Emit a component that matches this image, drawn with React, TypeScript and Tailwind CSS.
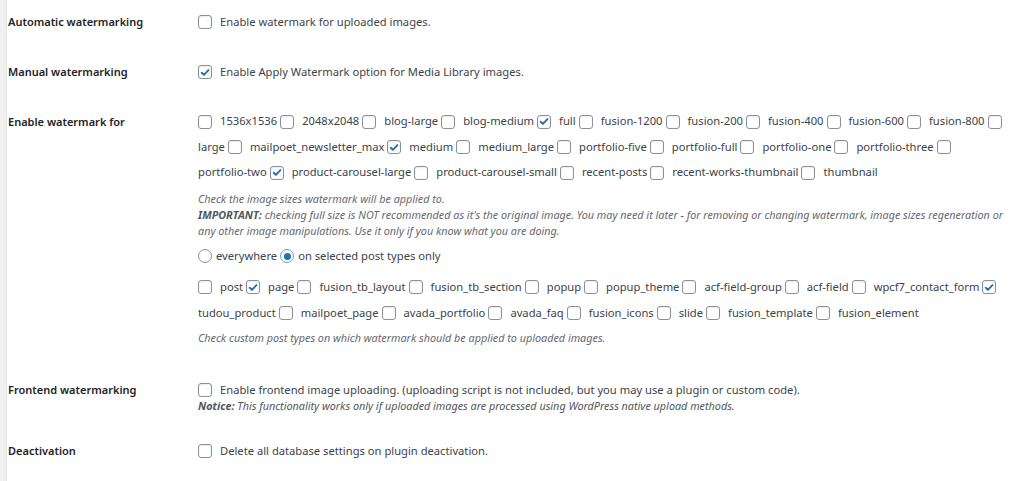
import React from 'react';

type Tok = string | { cb: boolean };

const font = "font-['Segoe_UI','Noto_Sans',sans-serif]";

// WP-style checkbox
const Box = ({ on }: { on?: boolean }) => (
  <span className="inline-flex items-center justify-center w-[14px] h-[14px] shrink-0 rounded-[3px] border border-[#8c8f94] bg-white shadow-[inset_0_1px_2px_rgba(0,0,0,0.08)]">
    {on && (
      <svg viewBox="0 0 14 14" className="w-[13px] h-[13px]">
        <path d="M3.2 7.3l2.5 2.5L11 4.2" fill="none" stroke="#2271b1" strokeWidth="2.2" strokeLinecap="round" strokeLinejoin="round" />
      </svg>
    )}
  </span>
);

const Radio = ({ on }: { on?: boolean }) => (
  <span className={`inline-flex items-center justify-center w-[14px] h-[14px] shrink-0 rounded-full border bg-white ${on ? 'border-[#6d9fcc]' : 'border-[#8c8f94]'}`}>
    {on && <span className="w-[7px] h-[7px] rounded-full bg-[#2271b1]" />}
  </span>
);

// one wrapped line of checkbox / label tokens
const TokLine = ({ items }: { items: Tok[] }) => (
  <div className="flex items-center h-[25.5px] whitespace-nowrap">
    {items.map((it, i) =>
      typeof it === 'string' ? (
        <span key={i} className="mr-[3px]">{it}</span>
      ) : (
        <span key={i} className="mr-[8px] flex"><Box on={it.cb} /></span>
      )
    )}
  </div>
);

const c = (on = false) => ({ cb: on });

const sizeLines: Tok[][] = [
  [c(), '1536x1536', c(), '2048x2048', c(), 'blog-large', c(), 'blog-medium', c(true), 'full', c(), 'fusion-1200', c(), 'fusion-200', c(), 'fusion-400', c(), 'fusion-600', c(), 'fusion-800', c()],
  ['large', c(), 'mailpoet_newsletter_max', c(true), 'medium', c(), 'medium_large', c(), 'portfolio-five', c(), 'portfolio-full', c(), 'portfolio-one', c(), 'portfolio-three', c()],
  ['portfolio-two', c(true), 'product-carousel-large', c(), 'product-carousel-small', c(), 'recent-posts', c(), 'recent-works-thumbnail', c(), 'thumbnail'],
];

const postLines: Tok[][] = [
  [c(), 'post', c(true), 'page', c(), 'fusion_tb_layout', c(), 'fusion_tb_section', c(), 'popup', c(), 'popup_theme', c(), 'acf-field-group', c(), 'acf-field', c(), 'wpcf7_contact_form', c(true)],
  ['tudou_product', c(), 'mailpoet_page', c(), 'avada_portfolio', c(), 'avada_faq', c(), 'fusion_icons', c(), 'slide', c(), 'fusion_template', c(), 'fusion_element'],
];

const Label = ({ children, h = 'h-[20px]' }: { children: React.ReactNode; h?: string }) => (
  <div className={`w-[190px] shrink-0 flex items-center ${h} text-[11px] font-[600] text-[#1d2327]`}>{children}</div>
);

const CheckRow = ({ text, on }: { text: string; on?: boolean }) => (
  <div className="flex items-center h-[20px] whitespace-nowrap">
    <span className="mr-[8px] flex"><Box on={on} /></span>
    <span>{text}</span>
  </div>
);

export default function App() {
  return (
    <div className={`flex w-[1024px] h-[481px] bg-white overflow-hidden ${font} text-[11.2px] text-[#3c434a]`}>
      <div className="w-[7px] shrink-0 bg-[#f0f0f1] border-r border-[#e4e4e6]" />
      <div className="flex-1 pl-px">
        {/* Automatic watermarking */}
        <div className="flex pt-[12px] pb-[18px]">
          <Label>Automatic watermarking</Label>
          <CheckRow text="Enable watermark for uploaded images." />
        </div>

        {/* Manual watermarking */}
        <div className="flex pt-[12px] pb-[18px]">
          <Label>Manual watermarking</Label>
          <CheckRow text="Enable Apply Watermark option for Media Library images." on />
        </div>

        {/* Enable watermark for */}
        <div className="flex pt-[9px] pb-[23px]">
          <Label h="h-[25.5px]">Enable watermark for</Label>
          <div className="flex flex-col">
            {sizeLines.map((l, i) => <TokLine key={i} items={l} />)}
            <div className="mt-[5.5px] text-[10.8px] leading-[16px] italic text-[#646970] whitespace-nowrap">
              <div>Check the image sizes watermark will be applied to.</div>
              <div><b className="text-[#50575e]">IMPORTANT:</b> checking full size is NOT recommended as it's the original image. You may need it later - for removing or changing watermark, image sizes regeneration or</div>
              <div>any other image manipulations. Use it only if you know what you are doing.</div>
            </div>
            <div className="mt-[7px] flex items-center h-[20px] whitespace-nowrap">
              <span className="mr-[4px] flex"><Radio /></span>
              <span className="mr-[3px]">everywhere</span>
              <span className="mr-[4px] flex"><Radio on /></span>
              <span>on selected post types only</span>
            </div>
            <div className="mt-[8px] [&>div]:h-[26px]">
              {postLines.map((l, i) => <TokLine key={i} items={l} />)}
            </div>
            <div className="mt-[4px] text-[10.8px] leading-[16px] italic text-[#646970] whitespace-nowrap">
              Check custom post types on which watermark should be applied to uploaded images.
            </div>
          </div>
        </div>

        {/* Frontend watermarking */}
        <div className="flex pt-[12px] pb-[16px]">
          <Label h="h-[18px]">Frontend watermarking</Label>
          <div className="flex flex-col">
            <div className="flex items-center h-[18px] whitespace-nowrap">
              <span className="mr-[8px] flex"><Box /></span>
              <span>Enable frontend image uploading. (uploading script is not included, but you may use a plugin or custom code).</span>
            </div>
            <div className="h-[14px] leading-[14px] text-[10.8px] italic text-[#50575e] whitespace-nowrap">
              <b>Notice:</b> This functionality works only if uploaded images are processed using WordPress native upload methods.
            </div>
          </div>
        </div>

        {/* Deactivation */}
        <div className="flex pt-[12px]">
          <Label>Deactivation</Label>
          <CheckRow text="Delete all database settings on plugin deactivation." />
        </div>
      </div>
    </div>
  );
}
